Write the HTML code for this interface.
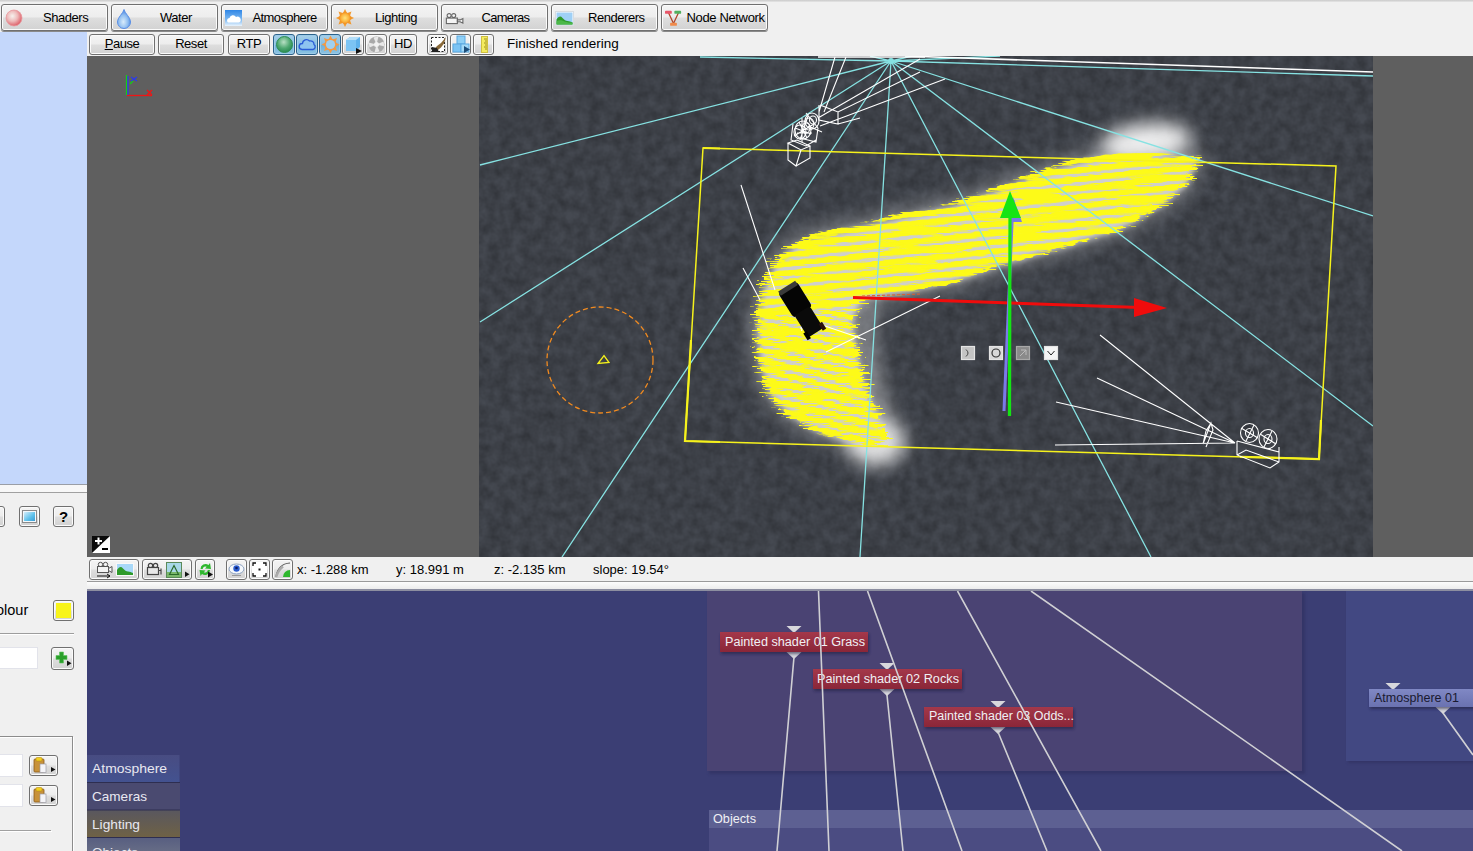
<!DOCTYPE html>
<html><head><meta charset="utf-8">
<style>
*{box-sizing:border-box;margin:0;padding:0}
html,body{width:1473px;height:851px;overflow:hidden;background:#f0f0f0;font-family:"Liberation Sans",sans-serif;font-size:13px;color:#000}
#app{position:relative;width:1473px;height:851px;overflow:hidden;background:#f0f0f0}
.abs{position:absolute}
.btn{position:absolute;border:1px solid #707070;border-radius:3px;background:linear-gradient(#f4f4f4 0%,#ededed 48%,#dedede 52%,#d2d2d2 100%);box-shadow:inset 0 0 0 1px #fbfbfb;text-align:center;white-space:nowrap}
.btn,.lsp{letter-spacing:-.45px}
.sbt{top:562px;font-size:13px;letter-spacing:0;white-space:nowrap}
.tab{top:4px;height:27px;width:107px;line-height:25px;font-size:13px;box-shadow:inset 0 0 0 1px #fbfbfb,0 1px 0 #8a8a8a}
.tb{top:34px;height:21px;line-height:18px;font-size:13px}
.ib{width:22px;height:21px;top:34px}
.on{background:linear-gradient(#a8d0ea,#86bee0 50%,#6fb0d8 51%,#8cc4e4);border-color:#2c628b;box-shadow:inset 0 0 0 1px #9ccbe8}
</style></head><body>
<div id="app">
<!-- TOPBAR -->
<div class="abs" style="left:0;top:0;width:1473px;height:2px;background:linear-gradient(#c9c9c9,#e6e6e6)"></div>
<div class="btn tab" style="left:1px"><svg class="abs" style="left:3px;top:3px" width="20" height="20" viewBox="0 0 20 20"><defs><radialGradient id="gs" cx="40%" cy="38%" r="65%"><stop offset="0" stop-color="#f6f2ee"/><stop offset=".5" stop-color="#eebaba"/><stop offset="1" stop-color="#dc5a64"/></radialGradient></defs><circle cx="9" cy="10" r="8" fill="url(#gs)" stroke="#e89aa0" stroke-width=".8"/></svg><span class="abs" style="left:41px;top:0">Shaders</span></div>
<div class="btn tab" style="left:111px"><svg class="abs" style="left:4px;top:3px" width="18" height="22" viewBox="0 0 18 22"><defs><radialGradient id="gw" cx="45%" cy="65%" r="60%"><stop offset="0" stop-color="#d9ecfb"/><stop offset=".6" stop-color="#8fbdf0"/><stop offset="1" stop-color="#4a86e0"/></radialGradient></defs><path d="M8 1.5C9 5.5 14.5 9.5 14.5 14A6.5 6.5 0 0 1 1.500 14C1.500 9.500 7 5.500 8 1.500Z" fill="url(#gw)" stroke="#5b8fe6" stroke-width="1"/></svg><span class="abs" style="left:48px;top:0">Water</span></div>
<div class="btn tab" style="left:221px"><svg class="abs" style="left:3px;top:5px" width="18" height="18" viewBox="0 0 18 18"><defs><linearGradient id="ga" x1="0" y1="0" x2="0" y2="1"><stop offset="0" stop-color="#2f86e6"/><stop offset=".6" stop-color="#7db9f2"/><stop offset="1" stop-color="#eaf4fd"/></linearGradient></defs><rect x="0" y="0" width="17" height="16" fill="url(#ga)"/><path d="M3 12.500a2.500 2.500 0 0 1 1.500-4.500a3.500 3.500 0 0 1 6.500-1a3 3 0 0 1 3 5.500z" fill="#fff"/></svg><span class="abs" style="left:30.500px;top:0;letter-spacing:-.6px">Atmosphere</span></div>
<div class="btn tab" style="left:331px"><svg class="abs" style="left:3px;top:3px" width="20" height="20" viewBox="0 0 20 20"><defs><radialGradient id="gl" cx="50%" cy="50%" r="50%"><stop offset="0" stop-color="#ffe27a"/><stop offset=".7" stop-color="#fbb23c"/><stop offset="1" stop-color="#f08a1c"/></radialGradient></defs><g fill="#f29a2e"><path d="M10 1l2 4h-4zM10 19l2-4h-4zM1 10l4-2v4zM19 10l-4-2v4zM3.500 3.500l4.200 1.500l-2.700 2.700zM16.500 3.500l-1.500 4.200l-2.700-2.700zM3.500 16.500l1.500-4.200l2.700 2.700zM16.500 16.500l-4.200-1.500l2.700-2.700z"/></g><circle cx="10" cy="10" r="5.800" fill="url(#gl)"/></svg><span class="abs" style="left:43px;top:0">Lighting</span></div>
<div class="btn tab" style="left:441px"><svg class="abs" style="left:3px;top:8px" width="22" height="12" viewBox="0 0 24 13"><g fill="#f4f4f4" stroke="#666" stroke-width="1.200"><circle cx="4.500" cy="2.800" r="2.200"/><circle cx="9.500" cy="2.800" r="2.200"/><rect x="1.500" y="5.500" width="12" height="6"/><path d="M13.500 7.500h3l3-1.500v5l-3-1.500h-3z"/></g></svg><span class="abs" style="left:39.500px;top:0;letter-spacing:-.7px">Cameras</span></div>
<div class="btn tab" style="left:551px"><svg class="abs" style="left:3px;top:6px" width="20" height="16" viewBox="0 0 20 16"><rect x=".5" y=".5" width="18" height="14" fill="#fff" stroke="#d8dce0"/><rect x="1.500" y="1.500" width="16" height="12" fill="#9fd0f6"/><path d="M1.500 13.500v-5c2-3 4-4 6-1.500c2 2 3 3 5 3c2 0 3 1 5 1.500v2z" fill="#2e9a2a"/><path d="M1.500 13.500v-3c3-2 5-1 8 0c3 1 5 1 8 1v2z" fill="#4cb848"/></svg><span class="abs" style="left:36px;top:0">Renderers</span></div>
<div class="btn tab" style="left:661px"><svg class="abs" style="left:3px;top:5px" width="17" height="17" viewBox="0 0 20 20"><path d="M4 3l6 13M16 3l-6 13" stroke="#b0462a" stroke-width="1.500" fill="none"/><rect x="0" y="1" width="8" height="3.500" rx="1" fill="#e8566a"/><rect x="11" y="1" width="8" height="3.500" rx="1" fill="#52b060"/><rect x="6" y="15" width="8" height="3.500" rx="1" fill="#f08a4a"/></svg><span class="abs" style="left:24.500px;top:0;letter-spacing:-.35px">Node Network</span></div>

<!-- TOOLBAR2 -->
<div class="btn tb" style="left:89px;width:66px"><span style="text-decoration:underline">P</span>ause</div>
<div class="btn tb" style="left:158px;width:66px">Reset</div>
<div class="btn tb" style="left:228px;width:42px">RTP</div>
<div class="btn ib on" style="left:273px"><svg class="abs" style="left:1px;top:0" width="19" height="19" viewBox="0 0 19 19"><defs><radialGradient id="gg" cx="45%" cy="35%" r="65%"><stop offset="0" stop-color="#b8e0c4"/><stop offset=".6" stop-color="#4fa871"/><stop offset="1" stop-color="#2a8a52"/></radialGradient></defs><circle cx="9.500" cy="9.500" r="8" fill="url(#gg)" stroke="#2f8f55" stroke-width="1"/></svg></div>
<div class="btn ib on" style="left:296px"><svg class="abs" style="left:1px;top:0" width="19" height="19" viewBox="0 0 19 19"><path d="M4 14.500a3 3 0 0 1 .5-6a4 4 0 0 1 7-2.500a3.500 3.500 0 0 1 4.500 3.500a2.800 2.800 0 0 1-1 5z" fill="#8ec4f0" stroke="#2a5cd6" stroke-width="1.300"/></svg></div>
<div class="btn ib on" style="left:319px"><svg class="abs" style="left:1px;top:0" width="19" height="19" viewBox="0 0 19 19"><g fill="#f39a45"><path d="M9.500 .5l2 4h-4zM9.500 18.500l2-4h-4zM.5 9.500l4-2v4zM18.500 9.500l-4-2v4zM3 3l4.200 1.500l-2.700 2.700zM16 3l-1.500 4.200l-2.700-2.700zM3 16l1.500-4.200l2.700 2.700zM16 16l-4.200-1.500l2.700-2.700z"/></g><circle cx="9.500" cy="9.500" r="6" fill="#f39a45"/><circle cx="9.500" cy="9.500" r="4.600" fill="#9fd0f0"/></svg></div>
<div class="btn ib" style="left:342px"><svg class="abs" style="left:1px;top:0" width="19" height="19" viewBox="0 0 19 19"><path d="M2 5l4-3h10v10l-4 4h-10z" fill="#5fb2ec"/><path d="M2 5h10v11h-10z" fill="#7cc4f4"/><path d="M2 5l4-3h10l-4 3z" fill="#b4def8"/><path d="M12 13l6 3l-6 3z" fill="#111"/></svg></div>
<div class="btn ib" style="left:365px"><svg class="abs" style="left:1px;top:0" width="19" height="19" viewBox="0 0 19 19"><circle cx="9.500" cy="9.500" r="8" fill="#a9a9a9"/><g fill="#e8e8e8"><path d="M9.500 9.500l-3-7l5-1z"/><path d="M9.500 9.500l7-3l1 5z"/><path d="M9.500 9.500l3 7l-5 1z"/><path d="M9.500 9.500l-7 3l-1-5z"/></g><circle cx="9.500" cy="9.500" r="2.500" fill="#f2f2f2"/></svg></div>
<div class="btn tb" style="left:389px;width:28px">HD</div>
<div class="btn ib" style="left:427px;width:21px"><svg class="abs" style="left:1px;top:0" width="19" height="19" viewBox="0 0 19 19"><rect x="2.500" y="2.500" width="13" height="14" fill="#fff" stroke="#222" stroke-dasharray="2 1.500"/><path d="M17 2l-5 6l-4 3l-4 5l3 .5l5-4l3-4z" fill="#8a6a3a"/><path d="M3 12l5 1l2 4h-7z" fill="#222"/></svg></div>
<div class="btn ib" style="left:450px;width:21px"><svg class="abs" style="left:1px;top:0" width="19" height="19" viewBox="0 0 19 19"><rect x="5" y="1" width="8" height="8" fill="#8fd0f6" stroke="#5aa8e0"/><rect x="1" y="9" width="8" height="8" fill="#7cc4f4" stroke="#5aa8e0"/><rect x="9" y="9" width="8" height="8" fill="#a4daf8" stroke="#5aa8e0"/><path d="M12 11l6 3.500l-6 3.500z" fill="#1d4e7a"/></svg></div>
<div class="btn ib" style="left:473px;width:21px"><svg class="abs" style="left:1px;top:0" width="19" height="19" viewBox="0 0 19 19"><rect x="6.500" y="1.500" width="6" height="16" fill="#f4ec60" stroke="#cfc040"/><path d="M9 4h3M10 6h2M9 8h3M10 10h2M9 12h3M10 14h2" stroke="#8a7a10" stroke-width=".8"/></svg></div>
<span class="abs" style="left:507px;top:36px;font-size:13.500px">Finished rendering</span>

<!-- LEFTPANEL -->
<div class="abs" style="left:0;top:32px;width:87px;height:452px;background:#c4d7fb"></div>
<div class="abs" style="left:0;top:484px;width:87px;height:1px;background:#9a9ea6"></div>
<div class="abs" style="left:0;top:485px;width:87px;height:7px;background:#f7f7f7"></div>
<div class="abs" style="left:0;top:492px;width:87px;height:1px;background:#a0a0a0"></div>
<div class="btn" style="left:-16px;top:506px;width:21px;height:21px"></div>
<div class="btn" style="left:19px;top:506px;width:21px;height:21px"><svg class="abs" style="left:1px;top:1px" width="17" height="17" viewBox="0 0 17 17"><defs><linearGradient id="gm" x1="0" y1="0" x2="1" y2="1"><stop offset="0" stop-color="#d6eefa"/><stop offset=".6" stop-color="#5cc0ea"/><stop offset="1" stop-color="#3c9cd4"/></linearGradient></defs><rect x="1.500" y="2.500" width="14" height="12" fill="#f4f8fb" stroke="#8a8a8a"/><rect x="3" y="4" width="11" height="9" fill="url(#gm)"/></svg></div>
<div class="btn" style="left:53px;top:506px;width:21px;height:21px;font-weight:bold;font-size:15px;line-height:19px;letter-spacing:0">?</div>
<span class="abs" style="left:-14.500px;top:602px;font-size:14.500px">Colour</span>
<div class="btn" style="left:53px;top:600px;width:21px;height:21px"><div class="abs" style="left:2px;top:2px;width:15px;height:15px;background:#f8f41a"></div></div>
<div class="abs" style="left:0;top:633px;width:74px;height:1px;background:#9d9d9d"></div>
<div class="abs" style="left:0;top:634px;width:74px;height:1px;background:#fff"></div>
<div class="abs" style="left:-2px;top:647px;width:40px;height:22px;background:#fff;border:1px solid #e2e3ea"></div>
<div class="btn" style="left:51px;top:647px;width:23px;height:23px"><svg class="abs" style="left:2px;top:2px" width="19" height="19" viewBox="0 0 19 19"><path d="M5.500 2h4v3.500h3.500v4h-3.500v3.500h-4v-3.500h-3.500v-4h3.500z" fill="#2aa02a" stroke="#5fc45f" stroke-width=".6"/><path d="M13 10.500l4.500 2.700l-4.500 2.700z" fill="#111"/></svg></div>
<div class="abs" style="left:-3px;top:736px;width:76px;height:140px;border:1px solid #8c8c8c;box-shadow:1px 1px 0 #fff,inset 1px 1px 0 #fff"></div>
<div class="abs" style="left:-2px;top:754px;width:25px;height:23px;background:#fff;border:1px solid #e2e3ea"></div>
<div class="abs" style="left:-2px;top:784px;width:25px;height:23px;background:#fff;border:1px solid #e2e3ea"></div>
<div class="btn" style="left:29px;top:755px;width:29px;height:21px"><svg class="abs" style="left:2px;top:0" width="26" height="19" viewBox="0 0 26 19"><use href="#clip"/></svg></div>
<div class="btn" style="left:29px;top:785px;width:29px;height:21px"><svg class="abs" style="left:2px;top:0" width="26" height="19" viewBox="0 0 26 19"><defs><g id="clip"><rect x="2" y="3" width="10" height="13" rx="1" fill="#c8923a" stroke="#8a5a1a" stroke-width=".8"/><rect x="4" y="1.500" width="6" height="3.500" rx="1" fill="#f4d020" stroke="#b89010" stroke-width=".6"/><rect x="8" y="8" width="6" height="8.500" fill="#f4f4f8" stroke="#9a9aa4" stroke-width=".7"/><path d="M19 11l4.500 2.500l-4.500 2.500z" fill="#111"/></g></defs><use href="#clip"/></svg></div>
<div class="abs" style="left:0;top:830px;width:51px;height:1px;background:#a0a0a0"></div>
<div class="abs" style="left:0;top:831px;width:52px;height:1px;background:#fff"></div>

<!-- VIEWPORT -->
<svg class="abs" style="left:87px;top:56px" width="1386" height="501" viewBox="87 56 1386 501">
<defs>
<filter id="noise" x="0" y="0" width="100%" height="100%" color-interpolation-filters="sRGB"><feTurbulence type="fractalNoise" baseFrequency="0.09" numOctaves="3" seed="3" result="t"/><feColorMatrix in="t" type="matrix" values="0 0 0 0 0  0 0 0 0 0  0 0 0 0 0  0.42 0 0 0 -0.09"/></filter>
<filter id="b8" filterUnits="userSpaceOnUse" x="479" y="0" width="894" height="620"><feGaussianBlur stdDeviation="9"/></filter>
<filter id="b3" x="-20%" y="-20%" width="140%" height="140%"><feGaussianBlur stdDeviation="3"/></filter>
<filter id="rough" x="-10%" y="-10%" width="120%" height="120%" color-interpolation-filters="sRGB"><feTurbulence type="fractalNoise" baseFrequency="0.08 0.9" numOctaves="2" seed="7" result="n"/><feColorMatrix in="n" type="matrix" values="1 0 0 0 0  0 0 0 0 0.5  0 0 0 0 0  0 0 0 0 1" result="n2"/><feDisplacementMap in="SourceGraphic" in2="n2" scale="34" xChannelSelector="R" yChannelSelector="G"/></filter>
<filter id="blob" filterUnits="userSpaceOnUse" x="700" y="100" width="560" height="400" color-interpolation-filters="sRGB"><feTurbulence type="fractalNoise" baseFrequency="0.018 0.11" numOctaves="2" seed="11" result="t"/><feColorMatrix in="t" type="matrix" values="0 0 0 0 1  0 0 0 0 1  0 0 0 0 1  9 0 0 0 -4.85" result="m"/><feComposite in="SourceGraphic" in2="m" operator="in"/></filter>
<pattern id="str" width="40" height="9" patternUnits="userSpaceOnUse" patternTransform="rotate(-6)"><rect x="0" y="0" width="40" height="5.800" fill="#fff"/></pattern>
<pattern id="str2" width="40" height="9" patternUnits="userSpaceOnUse" patternTransform="rotate(14)"><rect x="0" y="0" width="40" height="5.800" fill="#fff"/></pattern>
<mask id="mstr" maskUnits="userSpaceOnUse" x="700" y="100" width="560" height="400"><rect x="700" y="100" width="560" height="210" fill="url(#str)"/><rect x="700" y="310" width="560" height="190" fill="url(#str2)"/></mask>
<clipPath id="rc"><rect x="479" y="56" width="894" height="501"/></clipPath>
</defs>
<rect x="87" y="56" width="1386" height="501" fill="#5f5f5f"/>
<rect x="479" y="56" width="894" height="501" fill="#454951"/>
<rect x="479" y="56" width="894" height="501" fill="#2d3036" filter="url(#noise)"/>
<g clip-path="url(#rc)">
<!-- PAINT -->
<g>
<ellipse cx="1146" cy="142" rx="46" ry="19" fill="#fff" opacity=".9" filter="url(#b8)" transform="rotate(-6 1146 142)"/>
<ellipse cx="876" cy="442" rx="30" ry="24" fill="#fff" opacity=".8" filter="url(#b8)"/><path d="M872 300L868 340L878 390L886 420" stroke="#fff" stroke-width="16" fill="none" opacity=".35" filter="url(#b8)"/>
<path d="M1198 158L1150 155L1095 156L1060 166L1020 180L956 204L900 216L860 226L820 234L795 244L775 262L762 290L756 328L760 365L770 395L790 415L815 430L845 440L875 446L886 438L874 410L862 378L854 340L852 318L862 298L900 292L956 280L996 265L1056 248L1120 228L1160 205L1185 185Z" fill="#fff" stroke="#fff" stroke-width="16" stroke-linejoin="round" opacity=".3" filter="url(#b8)"/>
<path d="M1198 158L1150 155L1095 156L1060 166L1020 180L956 204L900 216L860 226L820 234L795 244L775 262L762 290L756 328L760 365L770 395L790 415L815 430L845 440L875 446L886 438L874 410L862 378L854 340L852 318L862 298L900 292L956 280L996 265L1056 248L1120 228L1160 205L1185 185Z" fill="#cfcfcc" filter="url(#b3)" transform="translate(1 1.500)"/>
<g filter="url(#rough)"><path d="M1198 158L1150 155L1095 156L1060 166L1020 180L956 204L900 216L860 226L820 234L795 244L775 262L762 290L756 328L760 365L770 395L790 415L815 430L845 440L875 446L886 438L874 410L862 378L854 340L852 318L862 298L900 292L956 280L996 265L1056 248L1120 228L1160 205L1185 185Z" fill="#fdfa18" stroke="#fdfa18" stroke-width="4" stroke-linejoin="round" mask="url(#mstr)"/><g filter="url(#blob)"><path d="M1198 158L1150 155L1095 156L1060 166L1020 180L956 204L900 216L860 226L820 234L795 244L775 262L762 290L756 328L760 365L770 395L790 415L815 430L845 440L875 446L886 438L874 410L862 378L854 340L852 318L862 298L900 292L956 280L996 265L1056 248L1120 228L1160 205L1185 185Z" fill="#fdfa18" stroke="#fdfa18" stroke-width="4" stroke-linejoin="round"/></g></g>
</g>
<!-- LINES -->
<g stroke="#86e2e2" stroke-width="1.300" fill="none">
<path d="M891 61L480 165M891 61L480 322M891 61L562 557M891 61L860 557M891 61L1151 557M891 61L1373 426M891 61L1373 216M891 61L1373 76M891 61L700 57M891 61L1000 56M891 61L870 56M891 61L912 56"/>
</g>
<circle cx="891" cy="61" r="3" fill="#86e2e2"/>
<path d="M818 57H925" stroke="#fff" stroke-width="1.500"/>
<path d="M905 56L1373 72" stroke="#fff" stroke-width="1.600" fill="none"/>
<g stroke="#f6f21c" stroke-width="1.500" fill="none"><path d="M703 148L1336 166L1319 459L685 441Z"/><path d="M703 148L720 148.500M691 340L685 441L720 442" stroke-width="2.200"/><path d="M1240 456.800L1319 459L1321 420" stroke-width="2.200"/></g>
<g stroke="#fff" stroke-width="1.100" fill="none">
<path d="M819 112L835 57M824 112L846 57M818 118L920 59M820 126L945 79M820 105L838 112L920 72M819 105V120L838 124V112M838 124L860 118"/>
<path d="M788 143L797 140L810 146L801 150ZM788 143V160L796 166L801 150M796 166L810 158V146"/>
<ellipse cx="803" cy="130" rx="8" ry="9"/><ellipse cx="812" cy="121" rx="7" ry="8"/><ellipse cx="806" cy="128" rx="4" ry="5"/><ellipse cx="813" cy="120" rx="3.500" ry="4"/>
<path d="M795 128L811 134M799 122L807 138M806 113L818 128M808 126L822 132M800 138L816 142L818 128M793 124L791 140L806 146L816 140M797 133H812M802 118V142M808 116L800 140M794 136L814 124"/><ellipse cx="800" cy="132" rx="6" ry="7"/><ellipse cx="809" cy="124" rx="5" ry="6"/>
<path d="M741 185L775 290M743 268L760 300M826 352L940 296M822 325L866 340M800 328H816M801.700 313V331"/>
<path d="M1235 443L1100 335M1235 443L1097 378M1235 443L1056 402M1235 443L1055 445M1203 444L1211 423L1213 430L1206 447M1203 444L1206 431L1211 423"/>
<ellipse cx="1249.500" cy="433" rx="9" ry="9.500"/><ellipse cx="1268" cy="439" rx="9" ry="9.500"/><ellipse cx="1249.500" cy="433" rx="4" ry="4.500"/><ellipse cx="1268" cy="439" rx="4" ry="4.500"/>
<path d="M1241 428L1258 438M1246 441L1254 425M1260 434L1276 444M1264 447L1272 431"/>
<path d="M1237 441V455L1270 468L1279 462V447M1237 455L1246 450L1279 462M1237 441L1279 452"/>
</g>
<g transform="translate(801 309) rotate(-32)"><rect x="-11" y="-26" width="22" height="30" rx="4" fill="#050505"/><rect x="-9" y="2" width="18" height="26" rx="3" fill="#0a0a0a"/><rect x="-10" y="-27" width="20" height="5" fill="#3a3a3a"/><rect x="-11" y="22" width="4" height="8" fill="#000"/><rect x="7" y="22" width="4" height="8" fill="#2a1010"/></g>
<path d="M853 297.500L1140 307.500" stroke="#f00c0c" stroke-width="3" fill="none"/>
<path d="M1134 298L1167 308L1134 317Z" fill="#f00c0c"/>
<path d="M862 296l60-2" stroke="#e05a30" stroke-width="1" stroke-dasharray="3 2"/>
<path d="M1013 200L1004 411" stroke="#7a7ae8" stroke-width="3" fill="none"/>
<path d="M1013 197L1022 222H1010Z" fill="#7a7ae8"/>
<path d="M1010 215L1009.500 416" stroke="#14e414" stroke-width="3.200" fill="none"/>
<path d="M1010 191L1021 218H1000Z" fill="#14e414"/>
<circle cx="600" cy="360" r="53" fill="none" stroke="#f08a20" stroke-width="1.300" stroke-dasharray="5 3"/>
<path d="M598 363.500L604 355.500L609 362.500Z" fill="none" stroke="#f4f01c" stroke-width="1.300"/>
<g stroke="#e4e4e4" stroke-width="1.200"><rect x="961.500" y="346.500" width="13" height="13" fill="#c4c4c4"/><rect x="989.500" y="346.500" width="13" height="13" fill="#d8d8d8"/><rect x="1016.500" y="346.500" width="13" height="13" fill="#8a8a8a" stroke="#a8a8a8"/><rect x="1044.500" y="346.500" width="13" height="13" fill="#f4f4f4"/></g>
<path d="M966 349.500q4 3.500 0 7" stroke="#444" fill="none"/><circle cx="996" cy="353" r="4" fill="none" stroke="#333" stroke-width="1.200"/><path d="M1020 356l6-6m-5 0h5v5" stroke="#bbb" fill="none"/><path d="M1047.500 351l3.500 4l3.500-4" stroke="#222" fill="none"/>

</g>
<!-- OVERLAY -->
<path d="M126.500 75V95" stroke="#14d014" stroke-width="1.200"/><path d="M128 76V95" stroke="#2a3af0" stroke-width="1.200"/><path d="M127 95.500H152" stroke="#f01414" stroke-width="1.300"/><path d="M131 77l6 4m0-4l-6 4" stroke="#2a3af0" stroke-width="1.200"/><path d="M130 84l3-3" stroke="#14d014" stroke-width="1.200"/><path d="M147 90l5 5m0-5l-5 5" stroke="#f01414" stroke-width="1.200"/>
<rect x="92" y="536" width="18" height="17" fill="#0a0a0a"/><path d="M92 553L110 536V553Z" fill="#fff"/><path d="M95 541h7M98.500 537.500v7" stroke="#fff" stroke-width="2"/><path d="M102 549h6" stroke="#000" stroke-width="2"/>

</svg>

<!-- STATUSBAR -->
<div class="abs" style="left:87px;top:557px;width:1386px;height:24px;background:#f0f0f0"></div>
<div class="abs" style="left:87px;top:581px;width:1386px;height:1px;background:#9a9a9a"></div>
<div class="abs" style="left:87px;top:582px;width:1386px;height:7px;background:linear-gradient(#fdfdfd,#ececec)"></div>
<div class="abs" style="left:87px;top:589px;width:1386px;height:2px;background:#8c8ea0"></div>
<div class="btn" style="left:89px;top:559px;width:50px;height:21px"><svg class="abs" style="left:4px;top:1px" width="44" height="18" viewBox="0 0 44 18"><g fill="#f4f4f4" stroke="#555" stroke-width="1"><circle cx="6.500" cy="3.500" r="2.200"/><circle cx="11.500" cy="3.500" r="2.200"/><rect x="3.500" y="5.500" width="11" height="6"/><path d="M14.500 7.500l3.500-2v6l-3.500-2z"/></g><path d="M3 15h13m-3-2l3 2l-3 2" stroke="#111" fill="none"/><rect x="22.500" y="2.500" width="17" height="12" fill="#a8d8f8" stroke="#f8f8f8"/><path d="M23 14v-5c2-3 4-4 6-1.500c2 2 3 3 5 3c2 0 3 1 5 1.500v2z" fill="#2e9a2a"/></svg></div>
<div class="btn" style="left:142px;top:559px;width:50px;height:21px"><svg class="abs" style="left:2px;top:1px" width="46" height="18" viewBox="0 0 46 18"><g fill="#e8e8e8" stroke="#444" stroke-width="1.200"><circle cx="5.500" cy="4.500" r="2.200"/><circle cx="10.500" cy="4.500" r="2.200"/><rect x="2.500" y="6.500" width="11" height="7"/><path d="M13.500 9.500h2.500v-2v6v-2"/></g><rect x="21.500" y="1.500" width="15" height="15" fill="#a8d8e8" stroke="#5a8a5a"/><rect x="22" y="11" width="14" height="5" fill="#7ab86a"/><path d="M24.500 13.500L29 4.500L33.500 13.500Z" fill="none" stroke="#2a6a2a" stroke-width="1.200"/><path d="M40 10.500l4.500 2.700l-4.500 2.700z" fill="#111"/></svg></div>
<div class="btn" style="left:195px;top:559px;width:20px;height:21px"><svg class="abs" style="left:0;top:0" width="19" height="19" viewBox="0 0 19 19"><path d="M4.500 9a5 5 0 0 1 8-4l1.500-2l1 6l-6-.5l1.700-1.800a2.800 2.800 0 0 0-4 2.300z" fill="#2eb82e"/><path d="M14 10a5 5 0 0 1-8 4l-1.500 2l-1-6l6 .5l-1.700 1.800a2.800 2.800 0 0 0 4-2.300z" fill="#2eb82e"/><path d="M12 11.500l5 3l-5 3z" fill="#111"/></svg></div>
<div class="btn" style="left:226px;top:559px;width:21px;height:21px"><svg class="abs" style="left:0;top:0" width="19" height="19" viewBox="0 0 19 19"><ellipse cx="9.500" cy="9" rx="7.500" ry="5" fill="#f4f8fc" stroke="#8aa0c0"/><circle cx="9.500" cy="8.500" r="3.200" fill="#2a5cd0"/><circle cx="9.500" cy="8" r="1.300" fill="#0a1a60"/><path d="M5 15.500h9" stroke="#999"/></svg></div>
<div class="btn" style="left:249px;top:559px;width:21px;height:21px"><svg class="abs" style="left:0;top:0" width="19" height="19" viewBox="0 0 19 19"><rect x="2" y="2" width="15" height="15" fill="#fff"/><path d="M3 6V3h3M13 3h3v3M16 13v3h-3M6 16H3v-3" stroke="#111" stroke-width="1.300" fill="none"/><rect x="8.500" y="8.500" width="2" height="2" fill="#111"/></svg></div>
<div class="btn" style="left:272px;top:559px;width:21px;height:21px"><svg class="abs" style="left:0;top:0" width="19" height="19" viewBox="0 0 19 19"><path d="M3 17C4 9 9 3.500 17 3" stroke="#555" stroke-width="1.200" fill="none"/><path d="M3 17C5 11 8 8 10 6.500" stroke="#aaa" stroke-width="2.500" fill="none"/><path d="M17 17V10a7 7 0 0 0-7 7z" fill="#2eb82e"/></svg></div>
<span class="abs sbt" style="left:297px">x: -1.288 km</span>
<span class="abs sbt" style="left:396px">y: 18.991 m</span>
<span class="abs sbt" style="left:494px">z: -2.135 km</span>
<span class="abs sbt" style="left:593px">slope: 19.54°</span>

<!-- NODENET -->
<svg class="abs" style="left:87px;top:591px" width="1386" height="260" viewBox="87 591 1386 260">
<defs><filter id="nsh" x="-5%" y="-20%" width="110%" height="150%"><feGaussianBlur stdDeviation="1.500"/></filter>
<linearGradient id="nr" x1="0" y1="0" x2="0" y2="1"><stop offset="0" stop-color="#a4384a"/><stop offset="1" stop-color="#8a2638"/></linearGradient>
<linearGradient id="na" x1="0" y1="0" x2="0" y2="1"><stop offset="0" stop-color="#8088c4"/><stop offset="1" stop-color="#6a72b0"/></linearGradient>
<path id="tri" d="M-7.500 0H7.500L0 7Z"/></defs>
<rect x="87" y="591" width="1386" height="260" fill="#3b3e74"/>
<rect x="709" y="593" width="596" height="181" fill="#2a2c5a" opacity=".5" filter="url(#nsh)"/>
<rect x="707" y="591" width="595" height="180" fill="#4a4373"/>
<rect x="1348" y="593" width="130" height="170" fill="#2a2c5a" opacity=".5" filter="url(#nsh)"/>
<rect x="1346" y="591" width="130" height="170" fill="#424882"/>
<rect x="709" y="810" width="770" height="45" fill="#4b4c82"/>
<rect x="709" y="810" width="770" height="18" fill="#5d6092"/>
<g font-family="Liberation Sans, sans-serif" font-size="12.500" fill="#f0f0f4">
<text x="713" y="823" textLength="43" lengthAdjust="spacingAndGlyphs">Objects</text>
<g fill="#d8d8dc"><use href="#tri" x="794" y="626"/><use href="#tri" x="794" y="652"/><use href="#tri" x="887" y="663"/><use href="#tri" x="887" y="689"/><use href="#tri" x="998" y="701"/><use href="#tri" x="998" y="727"/><use href="#tri" x="1393" y="683"/><use href="#tri" x="1443" y="707"/></g>
<rect x="721" y="634" width="148" height="20" fill="#1c1c40" opacity=".6" filter="url(#nsh)"/>
<rect x="720" y="632" width="148" height="20" fill="url(#nr)"/>
<text x="725" y="646" textLength="140" lengthAdjust="spacingAndGlyphs">Painted shader 01 Grass</text>
<rect x="814" y="671" width="149" height="20" fill="#1c1c40" opacity=".6" filter="url(#nsh)"/>
<rect x="813" y="669" width="149" height="20" fill="url(#nr)"/>
<text x="817" y="683" textLength="142" lengthAdjust="spacingAndGlyphs">Painted shader 02 Rocks</text>
<rect x="925" y="709" width="149" height="20" fill="#1c1c40" opacity=".6" filter="url(#nsh)"/>
<rect x="924" y="707" width="149" height="20" fill="url(#nr)"/>
<text x="929" y="720" textLength="145" lengthAdjust="spacingAndGlyphs">Painted shader 03 Odds...</text>
<rect x="1370" y="691" width="110" height="18" fill="#1c1c40" opacity=".6" filter="url(#nsh)"/>
<rect x="1369" y="689" width="110" height="18" fill="url(#na)"/>
<text x="1374" y="702" textLength="85" lengthAdjust="spacingAndGlyphs" fill="#1a1a30">Atmosphere 01</text>
<g stroke="#d0d0d4" stroke-width="1.600" fill="none"><path d="M794 657L777 851M818.500 591L829 851M867.500 591L962 851M887 695L903 851M957.500 591L1101 851M998 732L1047 851M1031 591L1402 851M1443 713L1473 755"/></g>
</g>
<g font-family="Liberation Sans, sans-serif" font-size="13" fill="#e8e8f0">
<linearGradient id="l1" x1="0" y1="0" x2="0" y2="1"><stop offset="0" stop-color="#484c82"/><stop offset="1" stop-color="#435290"/></linearGradient><linearGradient id="l3" x1="0" y1="0" x2="0" y2="1"><stop offset="0" stop-color="#59575f"/><stop offset="1" stop-color="#6f6245"/></linearGradient><linearGradient id="l4" x1="0" y1="0" x2="0" y2="1"><stop offset="0" stop-color="#575e80"/><stop offset="1" stop-color="#757a8c"/></linearGradient><rect x="87" y="755" width="92.500" height="27.500" fill="url(#l1)"/><rect x="87" y="782.500" width="93" height="27.500" fill="#4a4a70"/><rect x="87" y="810" width="93" height="27.500" fill="url(#l3)"/><rect x="87" y="837.500" width="93" height="27.500" fill="url(#l4)"/>
<path d="M87 782.500H180M87 810H180M87 837.500H180" stroke="#2e2e50" stroke-width="1"/>
<text x="92" y="773" textLength="75" lengthAdjust="spacingAndGlyphs">Atmosphere</text><text x="92" y="801" textLength="55" lengthAdjust="spacingAndGlyphs">Cameras</text><text x="92" y="829" textLength="48" lengthAdjust="spacingAndGlyphs">Lighting</text><text x="92" y="857" textLength="46" lengthAdjust="spacingAndGlyphs">Objects</text>
</g>
</svg>

</div>
</body></html>
